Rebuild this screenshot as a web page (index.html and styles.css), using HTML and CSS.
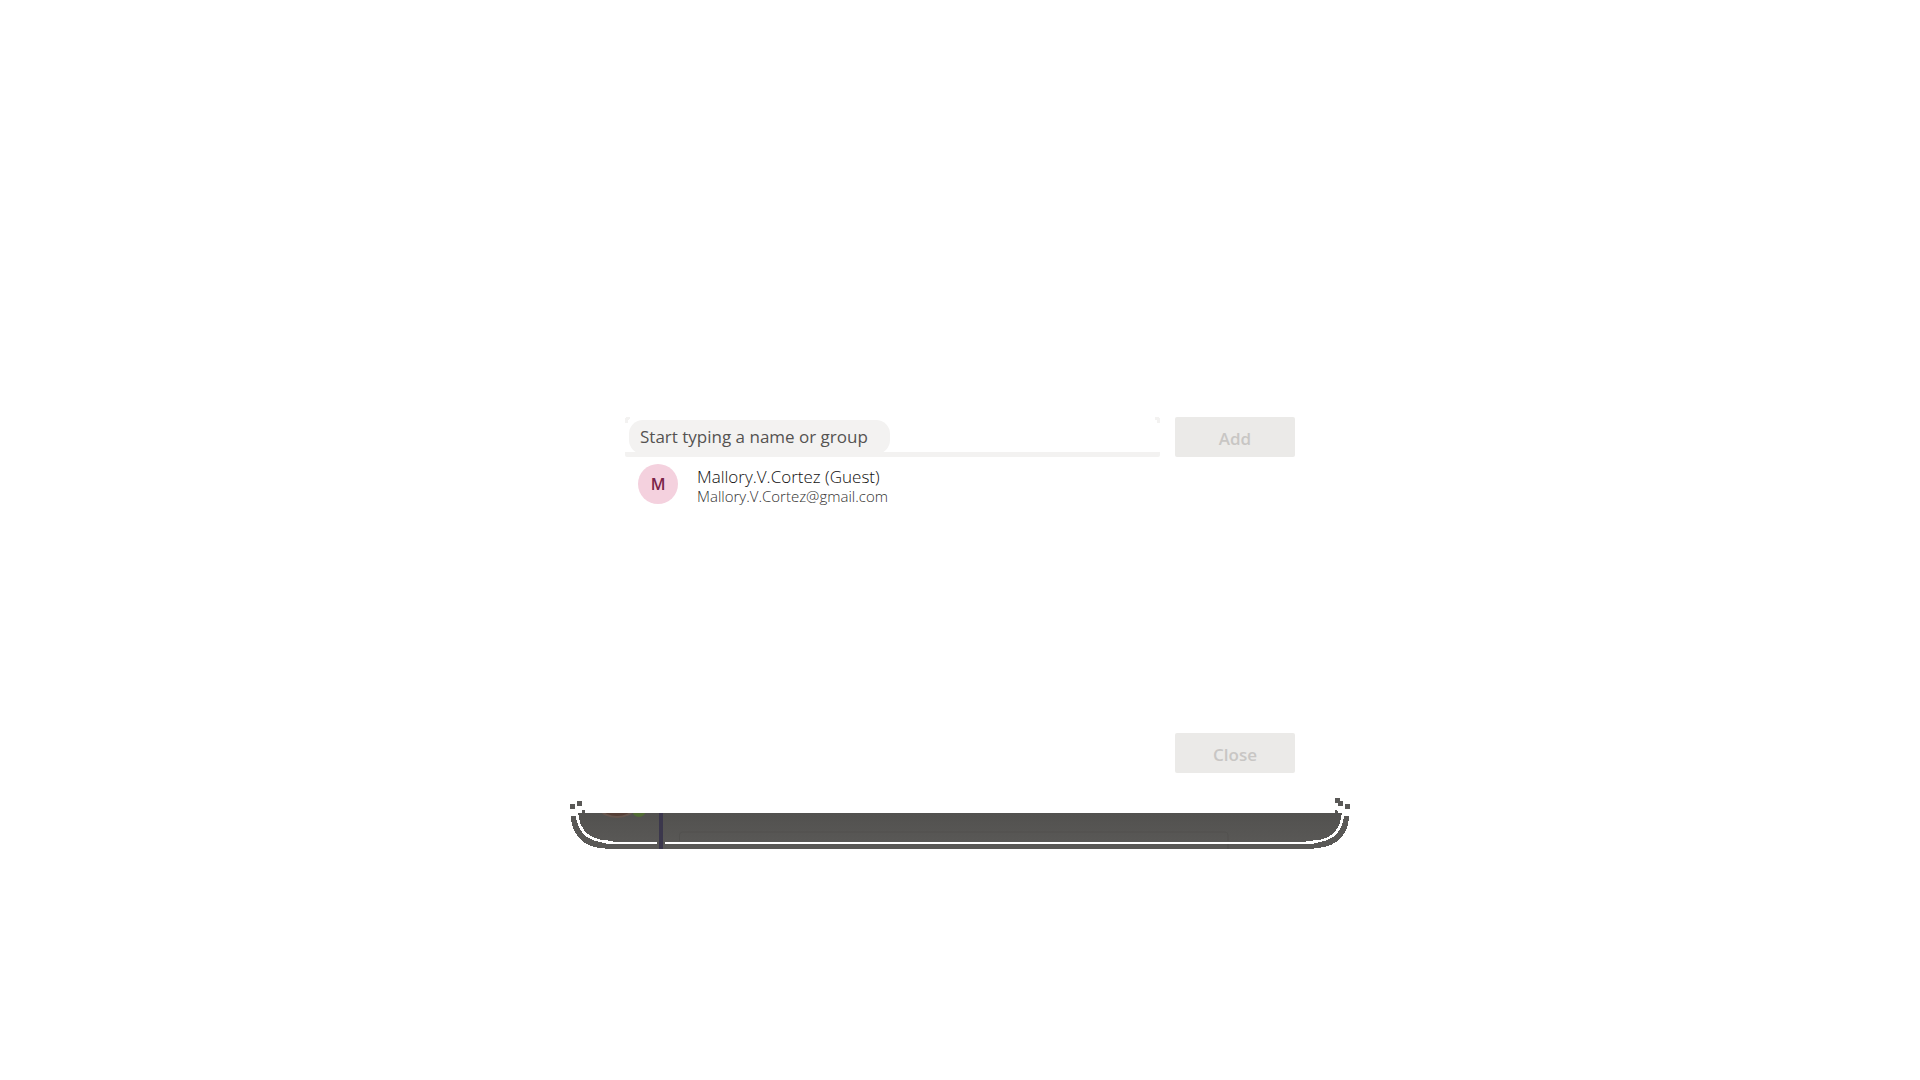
FILE: index.html
```html
<!DOCTYPE html>
<html lang="en">
<head>
<meta charset="utf-8">
<title>Add members</title>
<link rel="stylesheet" href="styles.css">
</head>
<body>
<main class="dialog">
  <div class="content">
    <form class="add-row">
      <div class="field">
        <svg class="corner" viewBox="0 0 5 6" aria-hidden="true"><path d="M1 0h4v2H4v1H3v3H0V1h1z" fill="#f3f2f1"/></svg>
        <input class="field-input" type="text" placeholder="Start typing a name or group" aria-label="Name or group">
        <svg class="corner" viewBox="0 0 5 6" aria-hidden="true"><path d="M0 0h4v1h1v5H2V3H0z" fill="#f3f2f1"/></svg>
      </div>
      <button class="btn" type="button" disabled>Add</button>
    </form>
    <ul class="members">
      <li class="member">
        <span class="avatar">M</span>
        <div class="person">
          <div class="name">Mallory.V.Cortez (Guest)</div>
          <div class="email">Mallory.V.Cortez@gmail.com</div>
        </div>
      </li>
    </ul>
    <div class="footer"><button class="btn" type="button" disabled>Close</button></div>
  </div>
  <svg class="edge" viewBox="0 0 780 51" aria-hidden="true">
    <defs>
      <linearGradient id="shade" x1="0" y1="0" x2="0" y2="1"><stop offset="0" stop-color="#52514f"/><stop offset="1" stop-color="#595856"/></linearGradient>
      <clipPath id="band"><path d="M0 15H780V51H0z"/></clipPath>
    </defs>
    <g shape-rendering="crispEdges">
      <g fill="#595856">
        <path d="M0 6h5v5H0zM7 3h5v5H7zM12 12h3v3h-3zM765 0h5v5h-5zM768 3h5v5h-5zM775 6h5v5h-5zM765 12h2v1h1v2h-3z"/>
        <path d="M1 18H6C7 32 16 42 30 44Q36 46 43 46H737Q744 46 750 44C764 42 773 32 774 18H779C779 36 766 49 748 50L740 51H40L30 50C14 49 1 36 1 18Z"/>
      </g>
      <path d="M8 15H772C771 31 762 40 750 42L736 43V44H43V43L32 42C18 40 9 31 8 15Z" fill="url(#shade)"/>
      <path d="M87 43h8v4h-8z" fill="#595856"/>
      <path d="M89 15h4v36h-4z" fill="#3b374c"/>
    </g>
    <g clip-path="url(#band)">
      <ellipse cx="47" cy="11" rx="17" ry="9" fill="#66564e"/>
      <ellipse cx="47" cy="11" rx="14" ry="7" fill="#553f36"/>
      <ellipse cx="69" cy="12" rx="7" ry="7" fill="#526c35"/>
    </g>
    <path d="M109.500 43V37q0-3 3-3H655q3 0 3 3v6M658 46v5" fill="none" stroke="#52514f"/>
  </svg>
</main>
</body>
</html>
```
FILE: styles.css
```css
* { box-sizing: border-box; }
body {
  margin: 0;
  min-height: 100vh;
  background: #fff;
  color: #252423;
  font-family: "Segoe UI", "Open Sans", "Noto Sans", sans-serif;
}
.dialog {
  max-width: 780px;
  margin: 0 auto;
  padding-top: 417px;
}
.content { padding: 0 55px 25px; }
.add-row { display: flex; gap: 15px; }
.field {
  flex: 1;
  display: flex;
  height: 40px;
  border-bottom: 5px solid #f3f2f1;
  border-radius: 0 0 2px 2px;
}
.corner { width: 5px; height: 6px; flex: none; }
.field-input {
  width: 261px;
  height: 34px;
  margin: 3px auto 0 -1px;
  padding: 0 11px 2px;
  border: 0;
  border-radius: 14px;
  background: #f3f2f1;
  font: 17px/24px "Segoe UI", "Open Sans", "Noto Sans", sans-serif;
}
.field-input::placeholder { color: #555351; opacity: 1; }
.btn {
  width: 120px;
  height: 40px;
  padding: 4px 0 0;
  border: 0;
  border-radius: 2px;
  background: #ebeae8;
  color: #c8c6c4;
  font: 600 17px/24px "Segoe UI", "Open Sans", "Noto Sans", sans-serif;
}
.members {
  min-height: 269px;
  margin: 7px 0 0;
  padding: 0 13px;
  list-style: none;
}
.member { display: flex; align-items: flex-start; gap: 19px; }
.avatar {
  width: 40px;
  height: 40px;
  border-radius: 50%;
  background: #f4d1de;
  color: #7a2448;
  font-size: 16px;
  font-weight: 600;
  line-height: 40px;
  text-align: center;
}
.person { padding-top: 3px; font-weight: 300; }
.name { color: #11100f; font-size: 17px; line-height: 20px; }
.email { color: #323130; font-size: 15px; line-height: 18px; }
.footer { display: flex; justify-content: flex-end; }
.edge { display: block; width: 100%; }
```
